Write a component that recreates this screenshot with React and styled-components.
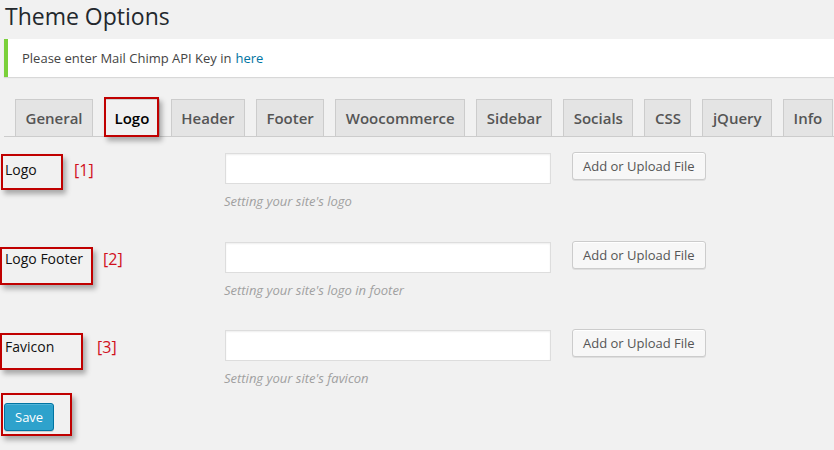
import React from 'react'
import styled, { createGlobalStyle } from 'styled-components'

const GlobalStyle = createGlobalStyle`
  html, body {
    margin: 0;
    padding: 0;
    background: #f1f1f1;
    font-family: "Open Sans", "Liberation Sans", sans-serif;
    color: #444;
  }
`

const Wrap = styled.div`
  padding: 0 0 0 4px;
  width: 830px;
  height: 450px;
  overflow: hidden;
`

const Title = styled.h1`
  margin: 0 0 0 1px;
  padding-top: 1px;
  font-size: 23px;
  font-weight: 400;
  line-height: 30px;
  color: #23282d;
`

const Notice = styled.div`
  margin-top: 8px;
  height: 38px;
  display: flex;
  align-items: center;
  background: #fff;
  border-left: 4px solid #7ad03a;
  box-shadow: 0 1px 1px rgba(0, 0, 0, 0.1);
  padding: 0 12px 0 14px;
  font-size: 13px;
  color: #444;

  a {
    color: #0074a2;
    text-decoration: none;
    margin-left: 4px;
  }
`

const TabBar = styled.div`
  margin-top: 22px;
  display: flex;
  gap: 11px;
  padding-left: 11px;
  border-bottom: 1px solid #ccc;
  white-space: nowrap;
`

const Tab = styled.div`
  position: relative;
  box-sizing: border-box;
  padding: 0 9.5px;
  border: 1px solid #ccc;
  border-bottom: none;
  background: ${p => (p.$active ? '#f1f1f1' : '#e4e4e4')};
  color: ${p => (p.$active ? '#000' : '#555')};
  font-size: 15px;
  font-weight: 600;
  line-height: 36px;
  margin-bottom: ${p => (p.$active ? '-1px' : '0')};
  height: ${p => (p.$active ? '38px' : '37px')};
`

const Marker = styled.span`
  position: absolute;
  top: ${p => p.$top}px;
  left: ${p => p.$left}px;
  width: ${p => p.$w}px;
  height: ${p => p.$h}px;
  box-sizing: border-box;
  border: 2px solid #c00000;
  box-shadow: 3px 4px 5px rgba(0, 0, 0, 0.3);
  pointer-events: none;
`

const Note = styled.span`
  position: absolute;
  top: ${p => p.$top}px;
  left: ${p => p.$left}px;
  font-size: 16px;
  line-height: 20px;
  color: #d0101c;
`

const Form = styled.div`
  margin-top: 16px;
  display: flex;
  flex-direction: column;
  gap: 31.5px;
`

const Row = styled.div`
  display: grid;
  grid-template-columns: 221px 347px auto;
  align-items: start;
`

const LabelCell = styled.div`
  position: relative;
  padding: 8px 0 0 1px;
  font-size: 14px;
  line-height: 18px;
  color: #111;
`

const Field = styled.div`
  display: flex;
  flex-direction: column;
`

const TextInput = styled.div`
  width: 326px;
  height: 31px;
  box-sizing: border-box;
  background: #fff;
  border: 1px solid #ddd;
  box-shadow: inset 0 1px 2px rgba(0, 0, 0, 0.07);
`

const Description = styled.div`
  margin: 8px 0 0 -1px;
  font-size: 13px;
  line-height: 18px;
  font-style: italic;
  color: #a0a0a0;
`

const Button = styled.button`
  margin-top: -1px;
  height: 28px;
  box-sizing: border-box;
  padding: 0 10px 1px;
  font-family: inherit;
  font-size: 13px;
  line-height: 26px;
  border-radius: 3px;
  border: 1px solid ${p => (p.$primary ? '#0074a2' : '#ccc')};
  background: ${p => (p.$primary ? '#2ea2cc' : '#f7f7f7')};
  color: ${p => (p.$primary ? '#fff' : '#555')};
  box-shadow: ${p =>
    p.$primary
      ? 'inset 0 1px 0 rgba(120, 200, 230, 0.5), 0 1px 0 rgba(0, 0, 0, 0.15)'
      : 'inset 0 1px 0 #fff, 0 1px 0 rgba(0, 0, 0, 0.08)'};
  cursor: pointer;
`

const SaveArea = styled.div`
  position: relative;
  margin-top: 16px;
  width: 50px;

  ${Button} {
    margin-top: 0;
    width: 50px;
  }
`

const tabs = ['General', 'Logo', 'Header', 'Footer', 'Woocommerce', 'Sidebar', 'Socials', 'CSS', 'jQuery', 'Info']

const rows = [
  { label: 'Logo', desc: "Setting your site's logo", note: '[1]', noteLeft: 70, box: { top: 1, left: -3, w: 62, h: 36 } },
  { label: 'Logo Footer', desc: "Setting your site's logo in footer", note: '[2]', noteLeft: 99, box: { top: 5, left: -4, w: 93, h: 38 } },
  { label: 'Favicon', desc: "Setting your site's favicon", note: '[3]', noteLeft: 93, box: { top: 3, left: -4, w: 83, h: 37 } }
]

export default function App () {
  return (
    <Wrap>
      <GlobalStyle />
      <Title>Theme Options</Title>
      <Notice>
        Please enter Mail Chimp API Key in<a href='#'>here</a>
      </Notice>
      <TabBar>
        {tabs.map(t => (
          <Tab key={t} $active={t === 'Logo'}>
            {t}
            {t === 'Logo' && <Marker $top={-3} $left={-1} $w={55} $h={40} />}
          </Tab>
        ))}
      </TabBar>
      <Form>
        {rows.map(r => (
          <Row key={r.label}>
            <LabelCell>
              {r.label}
              <Marker $top={r.box.top} $left={r.box.left} $w={r.box.w} $h={r.box.h} />
              <Note $top={7} $left={r.noteLeft}>{r.note}</Note>
            </LabelCell>
            <Field>
              <TextInput />
              <Description>{r.desc}</Description>
            </Field>
            <div>
              <Button>Add or Upload File</Button>
            </div>
          </Row>
        ))}
      </Form>
      <SaveArea>
        <Button $primary>Save</Button>
        <Marker $top={-10} $left={-3} $w={71} $h={43} />
      </SaveArea>
    </Wrap>
  )
}
